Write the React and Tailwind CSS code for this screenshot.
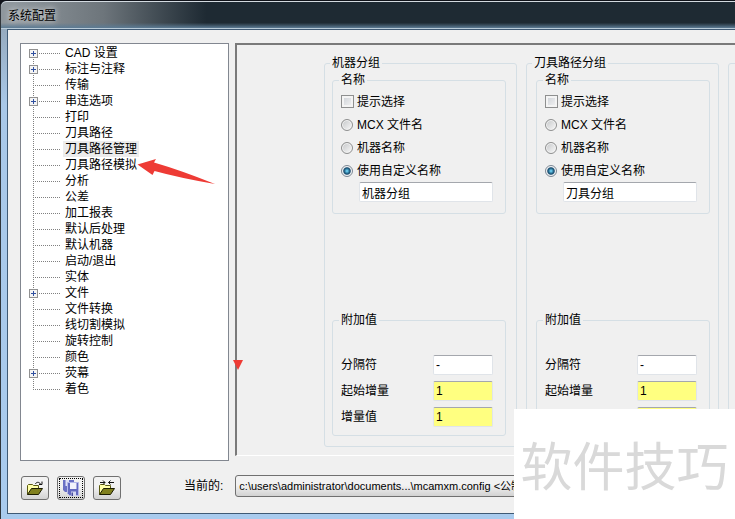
import React from "react";

const treeItems = [
  { label: "CAD 设置", branch: true },
  { label: "标注与注释", branch: true },
  { label: "传输" },
  { label: "串连选项", branch: true },
  { label: "打印" },
  { label: "刀具路径" },
  { label: "刀具路径管理", selected: true },
  { label: "刀具路径模拟" },
  { label: "分析" },
  { label: "公差" },
  { label: "加工报表" },
  { label: "默认后处理" },
  { label: "默认机器" },
  { label: "启动/退出" },
  { label: "实体" },
  { label: "文件", branch: true },
  { label: "文件转换" },
  { label: "线切割模拟" },
  { label: "旋转控制" },
  { label: "颜色" },
  { label: "荧幕", branch: true },
  { label: "着色" },
];

function Connector({ first, last, branch }) {
  return (
    <svg width="34" height="16" viewBox="0 0 34 16" shapeRendering="crispEdges" aria-hidden="true">
      <path
        d={`M4.5 ${first ? 8 : 0}V${last ? 8 : 16}`}
        stroke="#808080"
        strokeDasharray="1 1"
      />
      <path d="M4 8.5H32" stroke="#808080" strokeDasharray="1 1" />
      {branch && (
        <>
          <rect x="0.5" y="4.5" width="8" height="8" fill="#f4f4f4" stroke="#919191" />
          <path d="M2 8.5H7M4.5 6V11" stroke="#2f4f9f" />
        </>
      )}
    </svg>
  );
}

function TreeRow({ item, first, last }) {
  return (
    <li className="flex h-4 items-center">
      <Connector first={first} last={last} branch={item.branch} />
      <button
        type="button"
        className={
          item.selected
            ? "h-4 bg-[#ececec] px-0.5 leading-4 whitespace-nowrap"
            : "h-4 px-0.5 leading-4 whitespace-nowrap"
        }
      >
        {item.label}
      </button>
    </li>
  );
}

const boxStyle =
  "rounded-[2px] border border-[#e0e4e9] border-t-[#a4a7ad] px-0.5 leading-[18px] outline-none";
const groupLine = "rounded-[3px] border border-[#d5dfe5]";
const legendStyle = "-ml-0.5 px-0.5 leading-[14px]";

function NameChoices({ id, value }) {
  const radio =
    "size-3 appearance-none rounded-full border border-[#8e8f8f] bg-linear-to-br from-[#c4c6c8] to-[#fafafa] ring-1 ring-inset ring-[#f4f4f4] checked:border-[#7d8894] checked:bg-radial checked:from-[#63c3e6] checked:from-10% checked:via-[#12496b] checked:via-45% checked:to-[#eef2f5] checked:to-65%";
  return (
    <fieldset className={`${groupLine} px-2 pt-[3px] pb-[11px]`}>
      <legend className={legendStyle}>名称</legend>
      <label className="flex h-[23px] items-center gap-[3px]">
        <input
          type="checkbox"
          className="size-[13px] appearance-none border border-[#8e8f8f] bg-linear-to-br from-[#cbcfd5] to-[#f6f6f6] ring-2 ring-inset ring-[#f4f4f4]"
        />
        提示选择
      </label>
      <label className="flex h-[23px] items-center gap-1">
        <input type="radio" name={id} className={radio} />
        MCX 文件名
      </label>
      <label className="flex h-[23px] items-center gap-1">
        <input type="radio" name={id} className={radio} />
        机器名称
      </label>
      <label className="flex h-[23px] items-center gap-1">
        <input type="radio" name={id} defaultChecked className={radio} />
        使用自定义名称
      </label>
      <div className="flex pr-1 pl-[18px]">
        <input
          type="text"
          aria-label="自定义名称"
          defaultValue={value}
          className={`${boxStyle} h-5 w-full min-w-0 bg-white`}
        />
      </div>
    </fieldset>
  );
}

function ExtraValues() {
  const rows = [
    { label: "分隔符", value: "-", tone: "bg-white" },
    { label: "起始增量", value: "1", tone: "bg-[#ffff80]" },
    { label: "增量值", value: "1", tone: "bg-[#ffff80]" },
  ];
  return (
    <fieldset className={`${groupLine} mt-[99px] px-2 pt-7 pb-2`}>
      <legend className={legendStyle}>附加值</legend>
      <div className="flex flex-col gap-1.5 pr-1">
        {rows.map((row) => (
          <label key={row.label} className="flex items-center justify-between">
            {row.label}
            <input
              type="text"
              defaultValue={row.value}
              className={`${boxStyle} ${row.tone} h-5 w-[60px]`}
            />
          </label>
        ))}
      </div>
    </fieldset>
  );
}

function Group({ id, title, value, bodyPad }) {
  return (
    <fieldset className={`${groupLine} w-[193px] shrink-0 px-[7px] pt-[3px] pb-2.5`}>
      <legend className={legendStyle}>{title}</legend>
      <div className={bodyPad}>
        <NameChoices id={id} value={value} />
        <ExtraValues />
      </div>
    </fieldset>
  );
}

function Folder() {
  return (
    <>
      <path d="M1.5 15.5V6.500L2.500 5.500H6.500L7.500 6.500H12.500V9" fill="#ffffa8" stroke="#5a5a10" />
      <path d="M1.500 15.500L5.500 9.500H16.500L12.500 15.500Z" fill="#80801e" stroke="#1c1c00" />
    </>
  );
}

const toolButton =
  "flex h-6 w-7 items-center justify-center rounded-[3px] border border-[#707070] bg-linear-to-b from-[#f2f2f2] from-45% to-[#d2d2d2]";

function Toolbar() {
  return (
    <div className="flex gap-2 pt-px pl-px">
      <button type="button" aria-label="打开" className={toolButton}>
        <svg width="18" height="18" viewBox="0 0 18 18" className="shrink-0">
          <Folder />
          <path d="M9.500 5C10 3 13 2.500 14.500 5M16 2.500V5.500H13" fill="none" stroke="#111" />
        </svg>
      </button>
      <button type="button" aria-label="保存" className={`${toolButton} p-px`}>
        <span className="flex h-full w-full items-center justify-center border border-dotted border-black">
          <svg width="18" height="18" viewBox="0 0 18 18" className="shrink-0">
            <path d="M1 1H12V13H3L1 11Z" fill="#6a70c4" />
            <path d="M3.500 1H7V7H3.500Z" fill="#dfe1f6" />
            <path d="M5.500 3.500H16.500V16.500H7.500L5.500 14.500Z" fill="#6369c0" stroke="#b4b8ea" />
            <path d="M8 4H14.500V10H8Z" fill="#f2f3fc" />
            <path d="M9 12.500H14V17H9Z" fill="#d4d7f2" />
            <path d="M9.500 13.500H11V17H9.500Z" fill="#4a4f9e" />
          </svg>
        </span>
      </button>
      <button type="button" aria-label="合并" className={toolButton}>
        <svg width="18" height="18" viewBox="0 0 18 18" className="shrink-0">
          <Folder />
          <path d="M2 3.500H7M5 1.500L7 3.500L5 5.500M16 3.500H10.500M12.500 1.500L10.500 3.500L12.500 5.500" fill="none" stroke="#111" />
        </svg>
      </button>
    </div>
  );
}

export default function App() {
  return (
    <div className="relative h-screen w-full overflow-hidden bg-[#10131a] pt-px font-['Liberation_Sans','Noto_Sans_CJK_SC',sans-serif] text-[12px] leading-4 text-black">
      <div className="flex h-full flex-col rounded-tl-[6px] border-l border-[#30363c] bg-linear-to-b from-[#8fa0b0] via-[#a9c8e8] via-20% to-[#a9cbee]">
        <header className="flex h-7 shrink-0 flex-col rounded-tl-[6px] border-t border-b border-t-[#d3dae0] border-b-[#b9cbd8] bg-linear-to-r from-[#8f979d] from-2% via-[#6d757b] via-14% to-[#1e2a33] to-28%">
          <div className="flex flex-1 items-center bg-linear-to-b from-transparent from-80% to-[#5c7b94] px-[7px] pt-0.5">
            <h1 className="text-[12px] text-shadow-[0_0_6px_#ffffff]">系统配置</h1>
          </div>
        </header>
        <main className="mb-[5px] ml-1.5 flex min-h-0 flex-1 flex-col border-y border-l border-[#3f5a75] bg-[#f0f0f0] pt-[13px] pl-3">
          <div className="flex items-start gap-1.5">
            <ul className="h-[418px] w-[209px] shrink-0 border border-[#828790] bg-white pt-px pl-2">
              {treeItems.map((item, i) => (
                <TreeRow
                  key={item.label}
                  item={item}
                  first={i === 0}
                  last={i === treeItems.length - 1}
                />
              ))}
            </ul>
            <section className="flex h-[413px] min-w-0 flex-1 items-start gap-[9px] overflow-hidden border-t-2 border-b border-l-2 border-t-[#7a7a7a] border-b-white border-l-[#7a7a7a] pt-[11px] pl-[87px]">
              <Group id="machine" title="机器分组" value="机器分组" bodyPad="pr-[3px]" />
              <Group id="toolpath" title="刀具路径分组" value="刀具分组" bodyPad="pr-px pl-0.5" />
              <div className={`${groupLine} mt-[7px] h-[384px] w-[193px] shrink-0`} />
            </section>
          </div>
          <footer className="flex items-start pt-3.5">
            <Toolbar />
            <label className="flex min-w-0 flex-1 items-center gap-3 pl-[63px]">
              <span className="shrink-0">当前的:</span>
              <select className="h-[22px] w-[500px] shrink-0 appearance-none rounded-[3px] border border-[#707070] bg-linear-to-b from-[#f2f2f2] from-45% to-[#d2d2d2] px-[3px] text-[11px]">
                <option>c:\users\administrator\documents...\mcamxm.config &lt;公制&gt;</option>
              </select>
            </label>
          </footer>
        </main>
      </div>

      <svg className="absolute top-[156px] left-[136px]" width="80" height="30" viewBox="136 156 80 30" aria-hidden="true">
        <path d="M137.500 164.500L156 159L154 162.500Q180 170 215 184Q180 178 154.500 171L152.500 175Z" fill="#ee3b35" />
      </svg>
      <svg className="absolute top-[360px] left-[233px]" width="10" height="10" viewBox="0 0 10 10" aria-hidden="true">
        <path d="M0 0H10L5 10Z" fill="#ee3b35" />
      </svg>
      <div className="absolute right-0 bottom-0 flex h-[110px] w-[221px] items-center justify-center bg-white font-['Noto_Sans_CJK_SC',sans-serif] text-[52px] leading-none whitespace-nowrap text-[#d9d9d9]">
        软件技巧
      </div>
    </div>
  );
}
